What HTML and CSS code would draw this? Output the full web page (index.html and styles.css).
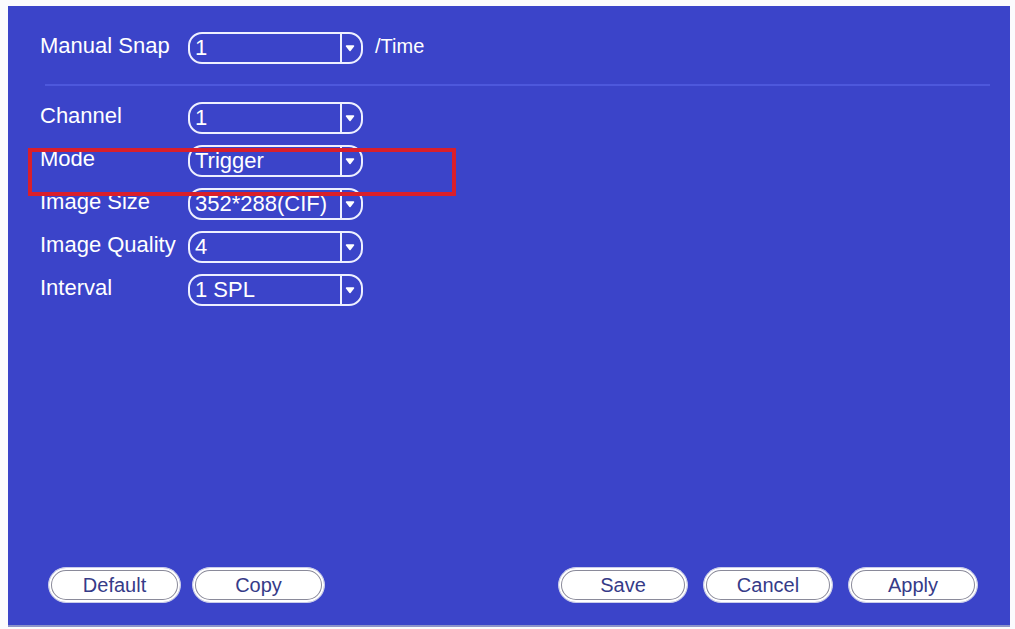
FILE: index.html
```html
<!DOCTYPE html>
<html lang="en">
  <head>
    <meta charset="UTF-8" />
    <title>Snapshot</title>
    <link rel="stylesheet" href="styles.css">
  </head>
  <body>
    <div class="panel">
      <!-- manual snap count -->
      <div class="row head-row">
        <span class="label">Manual Snap</span>
        <div class="select"><span class="value">1</span><span class="drop"><svg width="10" height="8" viewBox="0 0 10 8"><path d="M1.5 2 H8.5 L5 6.5 Z" fill="#fff" stroke="#fff" stroke-linejoin="round" stroke-width="1.5"/></svg></span></div>
        <span class="unit">/Time</span>
      </div>
      <div class="separator"></div>

      <div class="form">
        <div class="row">
          <span class="label">Channel</span>
          <div class="select"><span class="value">1</span><span class="drop"><svg width="10" height="8" viewBox="0 0 10 8"><path d="M1.5 2 H8.5 L5 6.5 Z" fill="#fff" stroke="#fff" stroke-linejoin="round" stroke-width="1.5"/></svg></span></div>
        </div>
        <div class="row">
          <span class="label">Mode</span>
          <div class="select"><span class="value">Trigger</span><span class="drop"><svg width="10" height="8" viewBox="0 0 10 8"><path d="M1.5 2 H8.5 L5 6.5 Z" fill="#fff" stroke="#fff" stroke-linejoin="round" stroke-width="1.5"/></svg></span></div>
        </div>
        <div class="row">
          <span class="label">Image Size</span>
          <div class="select"><span class="value">352*288(CIF)</span><span class="drop"><svg width="10" height="8" viewBox="0 0 10 8"><path d="M1.5 2 H8.5 L5 6.5 Z" fill="#fff" stroke="#fff" stroke-linejoin="round" stroke-width="1.5"/></svg></span></div>
        </div>
        <div class="row">
          <span class="label">Image Quality</span>
          <div class="select"><span class="value">4</span><span class="drop"><svg width="10" height="8" viewBox="0 0 10 8"><path d="M1.5 2 H8.5 L5 6.5 Z" fill="#fff" stroke="#fff" stroke-linejoin="round" stroke-width="1.5"/></svg></span></div>
        </div>
        <div class="row">
          <span class="label">Interval</span>
          <div class="select"><span class="value">1 SPL</span><span class="drop"><svg width="10" height="8" viewBox="0 0 10 8"><path d="M1.5 2 H8.5 L5 6.5 Z" fill="#fff" stroke="#fff" stroke-linejoin="round" stroke-width="1.5"/></svg></span></div>
        </div>
      </div>

      <!-- red marker around the mode row -->
      <div class="highlight"></div>

      <div class="buttons">
        <div class="group">
          <button class="btn">Default</button>
          <button class="btn">Copy</button>
        </div>
        <div class="group group-right">
          <button class="btn">Save</button>
          <button class="btn">Cancel</button>
          <button class="btn">Apply</button>
        </div>
      </div>
    </div>
  </body>
</html>
```

FILE: styles.css
```css
body {
  margin: 0;
  background: #fbfbfd;
}

* {
  box-sizing: border-box;
}

.panel {
  position: relative;
  display: flex;
  flex-direction: column;
  margin: 6px 5px 0 8px;
  height: 621px;
  background-color: #3b44c9;
  border-bottom: 2px solid #8d93c8;
  font-family: "Liberation Sans", Arial, sans-serif;
  color: #fff;
}

.row {
  display: flex;
  align-items: center;
  height: 32px;
  padding-left: 32px;
}

.head-row {
  margin-top: 26px;
}

.label {
  width: 148px;
  font-size: 22px;
  margin-top: -4px;
  white-space: nowrap;
}

.select {
  display: flex;
  width: 175px;
  height: 32px;
  border: 2px solid #eef0ff;
  border-radius: 14px;
}

.value {
  flex: 1;
  padding-left: 5px;
  font-size: 22px;
  line-height: 28px;
  white-space: nowrap;
}

.drop {
  display: flex;
  align-items: center;
  justify-content: center;
  width: 21px;
  border-left: 2px solid #eef0ff;
  padding-right: 3px;
}

.unit {
  margin-left: 12px;
  margin-top: -4px;
  font-size: 20px;
}

.separator {
  height: 2px;
  margin: 20px 20px 0 37px;
  background-color: #4d58dc;
}

.form {
  display: flex;
  flex-direction: column;
  gap: 11px;
  margin-top: 16px;
}

.highlight {
  position: absolute;
  left: 20px;
  top: 142px;
  width: 428px;
  height: 48px;
  border: 4px solid #d91f2b;
}

.buttons {
  display: flex;
  justify-content: space-between;
  margin-top: auto;
  margin-bottom: 22px;
  padding: 0 32px 0 40px;
}

.group {
  display: flex;
  gap: 11px;
}

.group .btn {
  width: 133px;
}

.group-right {
  gap: 15px;
}

.group-right .btn {
  width: 130px;
}

.btn {
  height: 36px;
  border: 1px solid #c9ccea;
  border-radius: 18px;
  background: #fff;
  box-shadow: inset 0 0 0 2px #fff, inset 0 0 0 3px #8a8a9a;
  font-family: "Liberation Sans", Arial, sans-serif;
  font-size: 20px;
  color: #363b88;
  padding: 0;
}
```
